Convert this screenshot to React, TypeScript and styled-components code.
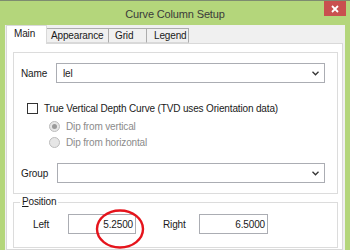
import { ReactElement } from 'react';
import styled, { createGlobalStyle } from 'styled-components';

const GlobalStyle = createGlobalStyle`
  html, body {
    margin: 0;
    padding: 0;
    background: #b4d67b;
  }

  body {
    font-family: 'Liberation Sans', Arial, sans-serif;
    font-size: 10px;
    letter-spacing: -0.15px;
    color: #1a1a1a;
  }
`;

const Window = styled.div`
  width: 350px;
  height: 250px;
  overflow: hidden;
  background: #b4d67b;
  border-top: 1px solid #7e8c70;
  box-sizing: border-box;
  display: flex;
  flex-direction: column;
`;

const TitleBar = styled.div`
  height: 24px;
  display: grid;
  grid-template-columns: 1fr auto 1fr;
  align-items: start;
  flex-shrink: 0;
`;

const Title = styled.div`
  grid-column: 2;
  font-size: 11px;
  line-height: 12px;
  margin-top: 7px;
  color: #3a3a3a;
`;

const CloseBtn = styled.div`
  grid-column: 3;
  justify-self: end;
  width: 22px;
  height: 15px;
  margin-right: 4px;
  background: #c9504f;
  display: flex;
  align-items: center;
  justify-content: center;
`;

const Dialog = styled.div`
  flex: 1;
  margin: 0 5px 0 5px;
  padding: 1px 2px 0 1px;
  background: #f0f0f0;
  display: flex;
  flex-direction: column;
`;

const TabStrip = styled.div`
  display: flex;
  align-items: flex-end;
  height: 17px;
  position: relative;
  z-index: 1;
`;

const Tab = styled.div<{ $w: number; $pad: number; $active?: boolean }>`
  box-sizing: border-box;
  width: ${({ $w }) => $w}px;
  padding-left: ${({ $pad }) => $pad}px;
  height: ${({ $active }) => ($active ? 19 : 15)}px;
  margin-bottom: ${({ $active }) => ($active ? -1 : 0)}px;
  margin-left: -1px;
  background: ${({ $active }) => ($active ? '#ffffff' : '#f0f0f0')};
  border: 1px solid ${({ $active }) => ($active ? '#d9d9d9' : '#acacac')};
  border-bottom: ${({ $active }) => ($active ? 'none' : '1px solid #d9d9d9')};
  line-height: 13px;
  padding-top: ${({ $active }) => ($active ? 1 : 0)}px;
  z-index: ${({ $active }) => ($active ? 2 : 1)};

  &:first-child {
    margin-left: 0;
  }
`;

const Panel = styled.div`
  flex: 1;
  background: #ffffff;
  border: 1px solid #d9d9d9;
  padding: 8px 4px 0 6px;
  display: flex;
  flex-direction: column;
  gap: 1px;
`;

const Box = styled.div`
  border: 1px solid #dcdcdc;
  padding: 10px 12px 10px 7px;
  display: flex;
  flex-direction: column;
`;

const Row = styled.div<{ $top?: number }>`
  display: flex;
  align-items: center;
  height: 20px;
  margin-top: ${({ $top }) => $top ?? 0}px;
`;

const Label = styled.span<{ $w: number }>`
  width: ${({ $w }) => $w}px;
  flex-shrink: 0;
  white-space: nowrap;
`;

const Combo = styled.div`
  flex: 1;
  height: 20px;
  box-sizing: border-box;
  border: 1px solid #abadb3;
  background: #fff;
  display: flex;
  align-items: center;
  padding: 0 5px 0 6px;
`;

const ComboText = styled.span`
  flex: 1;
`;

const CheckRow = styled.label<{ $top: number; $indent: number; $disabled?: boolean }>`
  display: flex;
  align-items: center;
  height: 16px;
  margin-top: ${({ $top }) => $top}px;
  padding-left: ${({ $indent }) => $indent}px;
  gap: 6px;
  color: ${({ $disabled }) => ($disabled ? '#8b8b8b' : 'inherit')};
`;

const CheckBox = styled.span`
  width: 11px;
  height: 11px;
  box-sizing: border-box;
  border: 1px solid #333;
  background: #fff;
`;

const Radio = styled.span<{ $checked?: boolean }>`
  width: 11px;
  height: 11px;
  box-sizing: border-box;
  border-radius: 50%;
  border: 1px solid #bcbcbc;
  background: #e6e6e6;
  display: flex;
  align-items: center;
  justify-content: center;

  &::after {
    content: '';
    display: ${({ $checked }) => ($checked ? 'block' : 'none')};
    width: 5px;
    height: 5px;
    border-radius: 50%;
    background: #9a9a9a;
  }
`;

const GroupBox = styled.fieldset`
  margin: 0;
  border: 1px solid #dcdcdc;
  padding: 5px 0 13px 19px;
  min-width: 0;
`;

const Legend = styled.legend`
  padding: 0 2px;
  line-height: 14px;
  margin-left: -13px;

  u {
    text-decoration-thickness: 1px;
  }
`;

const FieldRow = styled.div`
  display: flex;
  align-items: center;
  height: 20px;
`;

const NumField = styled.div<{ $w: number }>`
  position: relative;
  width: ${({ $w }) => $w}px;
  height: 20px;
  box-sizing: border-box;
  border: 1px solid #abadb3;
  background: #fff;
  display: flex;
  align-items: center;
  justify-content: flex-end;
  padding-right: 2px;
  flex-shrink: 0;
`;

const Gap = styled.span<{ $w: number }>`
  width: ${({ $w }) => $w}px;
  flex-shrink: 0;
`;

const Mark = styled.svg`
  position: absolute;
  left: 26px;
  top: -7px;
  overflow: visible;
`;

const Chevron = (): ReactElement => (
  <svg width="7" height="5" viewBox="0 0 7 5">
    <path d="M0.5 0.8 L3.5 3.8 L6.5 0.8" fill="none" stroke="#333" strokeWidth="1.3" />
  </svg>
);

export default function App(): ReactElement {
  return (
    <>
      <GlobalStyle />
      <Window>
        <TitleBar>
          <Title>Curve Column Setup</Title>
          <CloseBtn>
            <svg width="8" height="8" viewBox="0 0 8 8">
              <path d="M1 1 L7 7 M7 1 L1 7" stroke="#fff" strokeWidth="1.8" />
            </svg>
          </CloseBtn>
        </TitleBar>
        <Dialog>
          <TabStrip>
            <Tab $w={41} $pad={7} $active>Main</Tab>
            <Tab $w={63} $pad={4}>Appearance</Tab>
            <Tab $w={39} $pad={6}>Grid</Tab>
            <Tab $w={43} $pad={7}>Legend</Tab>
          </TabStrip>
          <Panel>
            <Box>
              <Row>
                <Label $w={35}>Name</Label>
                <Combo>
                  <ComboText>lel</ComboText>
                  <Chevron />
                </Combo>
              </Row>
              <CheckRow $top={17} $indent={6}>
                <CheckBox />
                True Vertical Depth Curve (TVD uses Orientation data)
              </CheckRow>
              <CheckRow $top={2} $indent={28} $disabled>
                <Radio $checked />
                Dip from vertical
              </CheckRow>
              <CheckRow $top={0} $indent={28} $disabled>
                <Radio />
                Dip from horizontal
              </CheckRow>
              <Row $top={13}>
                <Label $w={36}>Group</Label>
                <Combo>
                  <ComboText />
                  <Chevron />
                </Combo>
              </Row>
            </Box>
            <GroupBox>
              <Legend>
                <u>P</u>osition
              </Legend>
              <FieldRow>
                <Label $w={35}>Left</Label>
                <NumField $w={68}>
                  5.2500
                  <Mark width="50" height="42" viewBox="0 0 50 42">
                    <ellipse cx="25" cy="21" rx="23" ry="18.5" fill="none" stroke="#e5141c" strokeWidth="2.4" />
                  </Mark>
                </NumField>
                <Gap $w={27} />
                <Label $w={36}>Right</Label>
                <NumField $w={69}>6.5000</NumField>
              </FieldRow>
            </GroupBox>
          </Panel>
        </Dialog>
      </Window>
    </>
  );
}
